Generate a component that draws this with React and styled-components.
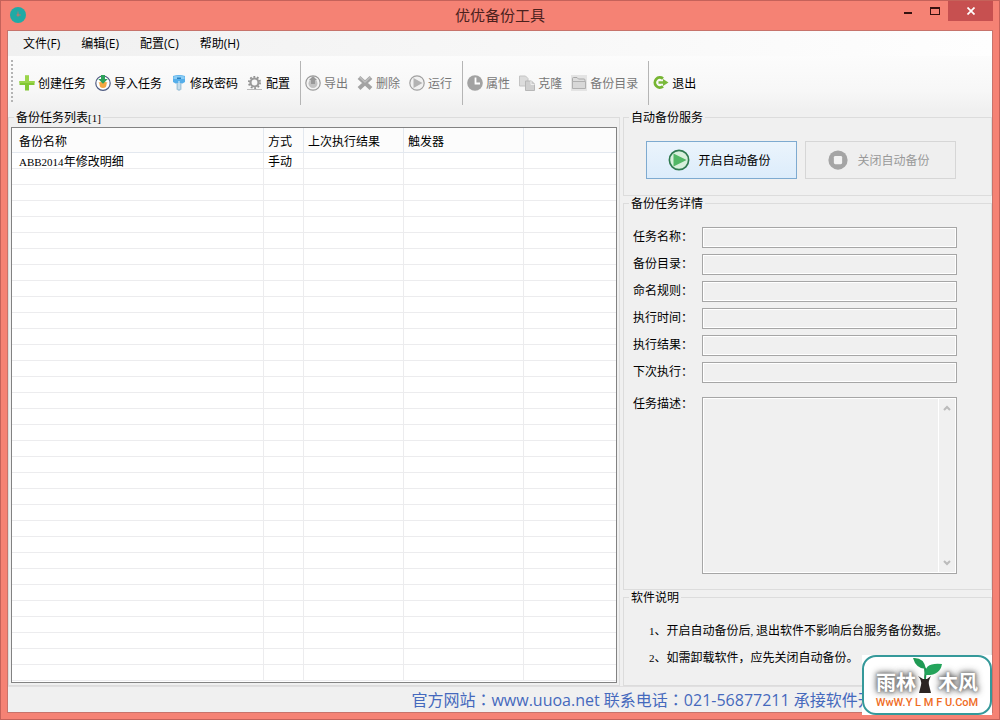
import React from "react";
import styled, { createGlobalStyle } from "styled-components";

const uiFont = `"Noto Sans CJK SC", sans-serif`;

const GlobalStyle = createGlobalStyle`
  * { box-sizing: border-box; }
  body { margin: 0; font: 12px/16px ${uiFont}; color: #000; }
  button, input, textarea { font: inherit; color: inherit; margin: 0; }
`;

const Window = styled.div`
  position: relative;
  display: flex;
  flex-direction: column;
  min-height: 100vh;
  padding: 0 6px 6px;
  border: 1px solid #c5625a;
  background: #f58274;
`;

const TitleBar = styled.header`
  display: grid;
  grid-template-columns: 1fr auto 1fr;
  align-items: center;
  height: 29px;
  margin: 0 0 0 3px;
  padding-bottom: 2px;
`;

const Title = styled.h1`
  margin: 0;
  padding-right: 3px;
  font-size: 15px;
  line-height: 20px;
  font-weight: 400;
  color: #4b211d;
`;

const WindowControls = styled.div`
  display: flex;
  justify-content: flex-end;
  align-self: start;
`;

const ControlButton = styled.button`
  display: flex;
  align-items: center;
  justify-content: center;
  width: ${(p) => (p.$close ? 45 : 27)}px;
  height: 20px;
  padding: 0;
  border: 0;
  background: ${(p) => (p.$close ? "#c75050" : "transparent")};
`;

const Client = styled.div`
  flex: 1;
  display: flex;
  flex-direction: column;
  border: 1px solid #c7736b;
  background: #f0f0f0;
`;

const MenuBar = styled.nav`
  display: flex;
  gap: 21px;
  height: 25px;
  padding: 0 15px;
  background: linear-gradient(90deg, #f0f0f0, #fefefe);
`;

const MenuItem = styled.button`
  padding: 0;
  border: 0;
  background: none;
  line-height: 24px;
  font-family: "Open Sans", ${uiFont};
`;

const ToolBar = styled.div`
  display: flex;
  align-items: center;
  height: 54px;
  padding: 0 3px;
  background: linear-gradient(#fcfcfc, #f7f7f7 65%, #f0f0f0);
`;

const Grip = styled.span`
  align-self: flex-start;
  width: 2px;
  height: 43px;
  margin: 4px 6px 0 0;
  background: repeating-linear-gradient(#b4b4b4 0 2px, transparent 2px 4px);
`;

const ToolButton = styled.button`
  display: flex;
  align-items: center;
  gap: 3px;
  margin-right: 9px;
  padding: 0;
  border: 0;
  background: none;
  white-space: nowrap;
  color: ${(p) => (p.disabled ? "#777" : "#000")};
`;

const Separator = styled.span`
  width: 1px;
  height: 44px;
  margin: 0 4px 0 1px;
  background: #b5b5b5;
`;

const Body = styled.main`
  flex: 1;
  display: grid;
  grid-template-columns: 1fr 369px;
  gap: 3px;
`;

const Side = styled.div`
  display: flex;
  flex-direction: column;
`;

const Group = styled.fieldset`
  flex: ${(p) => (p.$grow ? 1 : "none")};
  min-width: 0;
  margin: 0;
  padding: 0;
  border: 1px solid #dcdcdc;
`;

const Legend = styled.legend`
  margin-left: 5px;
  padding: 0 2px;
  line-height: 14px;
`;

const GroupBody = styled.div`
  height: 100%;
  padding: ${(p) => p.$pad};
`;

const Half = styled.span`
  font-family: "Liberation Serif", serif;
  font-size: 11px;
  line-height: 0;
`;

const ListBox = styled.div`
  height: 100%;
  padding-bottom: 1px;
  border: 1px solid #828282;
  background: #fff;
`;

const TaskTable = styled.table`
  width: 100%;
  table-layout: fixed;
  border-collapse: separate;
  border-spacing: 0;
`;

const Cell = styled.td`
  height: 16px;
  padding: 0 0 0 4px;
  border: solid #ececee;
  border-width: 0 1px 1px 0;
  line-height: 15px;
  font-weight: 400;
  text-align: left;
  white-space: nowrap;
  &:first-child { padding-left: 7px; }
  &:last-child { border-right: 0; }
`;

const HeadCell = styled(Cell)`
  height: 25px;
  background: #fcfcfc;
  border-color: #e3e8ef;
`;

const ServiceButtons = styled.div`
  display: grid;
  grid-template-columns: 1fr 1fr;
  gap: 8px;
`;

const ServiceButton = styled.button`
  display: flex;
  align-items: center;
  justify-content: center;
  gap: 8px;
  height: 38px;
  padding: 0 4px 0 0;
  border: 1px solid ${(p) => (p.disabled ? "#d6d6d6" : "#7eaad0")};
  background: ${(p) => (p.disabled ? "#efefef" : "linear-gradient(#ebf4fc, #dcecfb)")};
  color: ${(p) => (p.disabled ? "#999" : "#000")};
`;

const Fields = styled.div`
  display: grid;
  grid-template-columns: 63px 1fr;
  column-gap: 6px;
  row-gap: 6px;
`;

const FieldLabel = styled.label`
  line-height: 17px;
  white-space: nowrap;
  margin-top: ${(p) => (p.$tall ? 5 : 0)}px;
`;

const Field = styled.input`
  width: 100%;
  height: 21px;
  padding: 0 4px;
  border: 1px solid #a6a6a6;
  box-shadow: inset 0 0 0 1px #fff;
  background: #f0f0f0;
  outline: 0;
`;

const MemoBox = styled.div`
  display: flex;
  height: 177px;
  margin-top: 8px;
  padding: 1px;
  border: 1px solid #a6a6a6;
  box-shadow: inset 0 0 0 1px #fff;
`;

const Memo = styled.textarea`
  flex: 1;
  min-width: 0;
  padding: 2px 4px;
  border: 0;
  outline: 0;
  resize: none;
  overflow: hidden;
  background: #f0f0f0;
`;

const ScrollTrack = styled.div`
  display: flex;
  flex-direction: column;
  justify-content: space-between;
  align-items: center;
  width: 17px;
  padding: 5px 0;
  border-left: 1px solid #fff;
`;

const Note = styled.p`
  margin: 0;
  line-height: 27px;
  white-space: nowrap;
`;

const StatusBar = styled.footer`
  height: 26px;
  padding-left: 41%;
  border-top: 1px solid #e0dfe0;
  white-space: nowrap;
  font: 16px/26px "Open Sans", "Noto Sans CJK TC", sans-serif;
  color: #4569bd;
`;

const Badge = styled.div`
  position: absolute;
  right: 7px;
  bottom: 4px;
  width: 130px;
  height: 60px;
  background: #fff;
`;

const BadgeFrame = styled.div`
  height: 100%;
  display: flex;
  flex-direction: column;
  align-items: center;
  border: 2px solid #35999a;
  border-radius: 14px;
`;

const BadgeName = styled.div`
  display: flex;
  align-items: flex-end;
  height: 38px;
  font-size: 20px;
  line-height: 26px;
  font-weight: 700;
  color: #fff;
  text-shadow: 0 0 2px #888, 0 0 4px #777, 0 0 6px #777, 0 0 8px #888;
`;

const Sprout = styled.svg`
  width: 30px;
  height: 38px;
  margin: 0 -4px;
`;

const BadgeUrl = styled.div`
  font: 500 11px/16px Roboto, sans-serif;
  color: #ef6c1f;
  white-space: nowrap;
`;

const Svg = ({ s = 16, children }) => (
  <svg width={s} height={s} viewBox="0 0 16 16" fill="none" aria-hidden="true">
    {children}
  </svg>
);

const icons = {
  plus: (
    <Svg>
      <path d="M6 .5h4V6h5.500v4H10v5.500H6V10H.5V6H6z" fill="#82c834" />
      <path d="M6 .5h4V6h5.500v2H.5V6H6z" fill="#9bd54b" />
    </Svg>
  ),
  importTask: (
    <Svg>
      <circle cx="8" cy="8.200" r="7.200" fill="#fff" stroke="#4d5a80" strokeWidth="1.200" />
      <path d="M3.500 7a4.800 4.800 0 0 0 9 0L8 9z" fill="#f29a2e" />
      <circle cx="8" cy="9.500" r="3.500" fill="#f5a742" />
      <path d="M6 0h4v4h2.800L8 8.800 3.200 4H6z" fill="#2ea25a" />
    </Svg>
  ),
  key: (
    <Svg>
      <path d="M2 1Q8-1 14 1v6L11.500 8.500h-7L2 7z" fill="#55aeea" />
      <path d="M2.500 1.500Q8 0 13.500 1.500V4h-11z" fill="#8bcdf5" />
      <path d="M6 2.500h4v1.500H6z" fill="#277fc0" />
      <path d="M5.500 8h5v6.500L8 16l-2.500-1.500z" fill="#a5c7dc" />
      <path d="M7.500 6h1v8h-1z" fill="#e8f3fa" />
    </Svg>
  ),
  gear: (
    <Svg>
      <circle cx="7.500" cy="7.500" r="5.600" stroke="#909090" strokeWidth="1.800" strokeDasharray="1.800 1.720" />
      <circle cx="7.500" cy="7.500" r="4" stroke="#9a9a9a" strokeWidth="2.200" />
      <path d="M0 14.500h15" stroke="#b9b9b9" />
    </Svg>
  ),
  exportTask: (
    <Svg>
      <circle cx="8" cy="8" r="7.200" fill="#f3f3f3" stroke="#9a9a9a" strokeWidth="1.200" />
      <circle cx="8" cy="8.500" r="4.500" fill="#c2c2c2" />
      <path d="M8 1l4 4h-2v4H6V5H4z" fill="#999" />
    </Svg>
  ),
  remove: (
    <Svg>
      <path d="M2 2.500l12 11M14 2.500l-12 11" stroke="#a3a3a3" strokeWidth="4" />
      <path d="M2.500 2l5.500 5 5.500-5" stroke="#bebebe" strokeWidth="1.500" />
    </Svg>
  ),
  run: (
    <Svg>
      <circle cx="8" cy="8" r="7.200" fill="#f1f1f1" stroke="#a0a0a0" strokeWidth="1.200" />
      <path d="M4.500 3l9 5-9 5z" fill="#b3b3b3" />
    </Svg>
  ),
  clock: (
    <Svg>
      <circle cx="8" cy="8" r="7.800" fill="#a2a2a2" />
      <path d="M8.500 2.500v6H13" stroke="#fff" strokeWidth="1.800" />
    </Svg>
  ),
  clone: (
    <Svg>
      <path d="M.5 1h6l2.500 2.500V11H.5z" fill="#dcdcdc" stroke="#c4c4c4" />
      <path d="M6.500 6h6L15.500 9v6.500h-9z" fill="#cfcfcf" stroke="#b7b7b7" />
      <path d="M12 6v3.500h3.500" stroke="#eee" />
    </Svg>
  ),
  folder: (
    <Svg>
      <path d="M0 0h16v16H0z" fill="#e4e4e4" />
      <path d="M1.500 13V3.500q0-1 1-1H6L7.500 4H13q1 0 1 1v8z" fill="#ddd" stroke="#a9a9a9" />
      <path d="M1.500 6.500h13v7h-13z" fill="#d8d8d8" stroke="#b0b0b0" />
    </Svg>
  ),
  exit: (
    <Svg>
      <path d="M10 3.600a5 5 0 1 0 0 7.800" stroke="#76b532" strokeWidth="2.800" />
      <path d="M5.500 6.200H10V4l5.500 3.500L10 11V8.800H5.500z" fill="#7ab93a" />
    </Svg>
  ),
};

const toolGroups = [
  [["plus", "创建任务"], ["importTask", "导入任务"], ["key", "修改密码"], ["gear", "配置"]],
  [["exportTask", "导出", true], ["remove", "删除", true], ["run", "运行", true]],
  [["clock", "属性", true], ["clone", "克隆", true], ["folder", "备份目录", true]],
  [["exit", "退出"]],
];

const fields = ["任务名称", "备份目录", "命名规则", "执行时间", "执行结果", "下次执行"];
const emptyRows = Array.from({ length: 32 });

export default function App() {
  return (
    <Window>
      <GlobalStyle />
      <TitleBar>
        <Svg s={16}>
          <circle cx="8" cy="8" r="8" fill="#20aaa5" />
          <path d="M8 4.500V8h3" stroke="#9a807a" />
          <circle cx="8" cy="8" r="1.500" fill="#b07a72" />
        </Svg>
        <Title>优优备份工具</Title>
        <WindowControls>
          <ControlButton aria-label="最小化">
            <svg width="8" height="8"><path d="M0 5h8v2H0z" fill="#35110f" /></svg>
          </ControlButton>
          <ControlButton aria-label="最大化">
            <svg width="10" height="8"><path d="M0 0h10v8H0zM1 2v5h8V2z" fill="#35110f" fillRule="evenodd" /></svg>
          </ControlButton>
          <ControlButton $close aria-label="关闭">
            <svg width="8" height="8"><path d="M.5.5l7 7M7.500.5l-7 7" stroke="#fff" strokeWidth="1.700" /></svg>
          </ControlButton>
        </WindowControls>
      </TitleBar>

      <Client>
        <MenuBar>
          {["文件(F)", "编辑(E)", "配置(C)", "帮助(H)"].map((m) => (
            <MenuItem key={m}>{m}</MenuItem>
          ))}
        </MenuBar>

        <ToolBar>
          <Grip />
          {toolGroups.map((group, i) => (
            <React.Fragment key={i}>
              {i > 0 && <Separator />}
              {group.map(([icon, label, off]) => (
                <ToolButton key={icon} disabled={off}>
                  {icons[icon]}
                  {label}
                </ToolButton>
              ))}
            </React.Fragment>
          ))}
        </ToolBar>

        <Body>
          <Group>
            <Legend>备份任务列表<Half>[1]</Half></Legend>
            <GroupBody $pad="3px 2px 2px">
              <ListBox>
                <TaskTable>
                  <colgroup>
                    <col width="252" />
                    <col width="40" />
                    <col width="100" />
                    <col width="120" />
                    <col />
                  </colgroup>
                  <thead>
                    <tr>
                      {["备份名称", "方式", "上次执行结果", "触发器", ""].map((h) => (
                        <HeadCell as="th" key={h}>{h}</HeadCell>
                      ))}
                    </tr>
                  </thead>
                  <tbody>
                    <tr>
                      <Cell><Half>ABB2014</Half>年修改明细</Cell>
                      <Cell>手动</Cell>
                      <Cell />
                      <Cell />
                      <Cell />
                    </tr>
                    {emptyRows.map((_, i) => (
                      <tr key={i}>
                        <Cell /><Cell /><Cell /><Cell /><Cell />
                      </tr>
                    ))}
                  </tbody>
                </TaskTable>
              </ListBox>
            </GroupBody>
          </Group>

          <Side>
            <Group>
              <Legend>自动备份服务</Legend>
              <GroupBody $pad="17px 35px 16px 22px">
                <ServiceButtons>
                  <ServiceButton>
                    <Svg s={22}>
                      <circle cx="8" cy="8" r="7" fill="#d8f0dc" stroke="#2f7a50" strokeWidth="1.200" />
                      <path d="M4 3.200l9.500 4.800L4 12.800z" fill="#52b765" />
                    </Svg>
                    开启自动备份
                  </ServiceButton>
                  <ServiceButton disabled>
                    <Svg s={22}>
                      <circle cx="8" cy="8" r="7" fill="#a5a5a5" />
                      <rect x="5" y="5" width="6" height="6" rx="1" fill="#f2f2f2" />
                    </Svg>
                    关闭自动备份
                  </ServiceButton>
                </ServiceButtons>
              </GroupBody>
            </Group>

            <Group>
              <Legend>备份任务详情</Legend>
              <GroupBody $pad="17px 34px 15px 9px">
                <Fields>
                  {fields.map((f, i) => (
                    <React.Fragment key={f}>
                      <FieldLabel htmlFor={`field-${i}`}>{f}：</FieldLabel>
                      <Field id={`field-${i}`} readOnly />
                    </React.Fragment>
                  ))}
                  <FieldLabel htmlFor="memo" $tall>任务描述：</FieldLabel>
                  <MemoBox>
                    <Memo id="memo" readOnly />
                    <ScrollTrack>
                      <svg width="8" height="8"><path d="M1 6l3-3 3 3" fill="none" stroke="#bbb" strokeWidth="2" /></svg>
                      <svg width="8" height="8"><path d="M1 2l3 3 3-3" fill="none" stroke="#bbb" strokeWidth="2" /></svg>
                    </ScrollTrack>
                  </MemoBox>
                </Fields>
              </GroupBody>
            </Group>

            <Group $grow>
              <Legend>软件说明</Legend>
              <GroupBody $pad="12px 8px 15px 25px">
                <Note><Half>1</Half>、开启自动备份后<Half>, </Half>退出软件不影响后台服务备份数据。</Note>
                <Note><Half>2</Half>、如需卸载软件，应先关闭自动备份。</Note>
              </GroupBody>
            </Group>
          </Side>
        </Body>

        <StatusBar>官方网站：www.uuoa.net 联系电话：021-56877211 承接软件开</StatusBar>
      </Client>

      <Badge>
        <BadgeFrame>
          <BadgeName>
            雨林
            <Sprout viewBox="0 0 30 38" aria-hidden="true">
              <path d="M6 19l5 3h4l4-3q-3 5-2 9l2 8H7l2-8q1-5-3-9z" fill="#2c2422" />
              <path d="M13 22q1-6 0-11" stroke="#1d8a4b" strokeWidth="2" fill="none" />
              <path d="M1 1q11-1 13 11Q4 12 1 1z" fill="#1f9a54" />
              <path d="M13 18Q12 5 30 7q-2 12-17 11z" fill="#23a45b" />
            </Sprout>
            木风
          </BadgeName>
          <BadgeUrl>WwW.Y L M F U.CoM</BadgeUrl>
        </BadgeFrame>
      </Badge>
    </Window>
  );
}
